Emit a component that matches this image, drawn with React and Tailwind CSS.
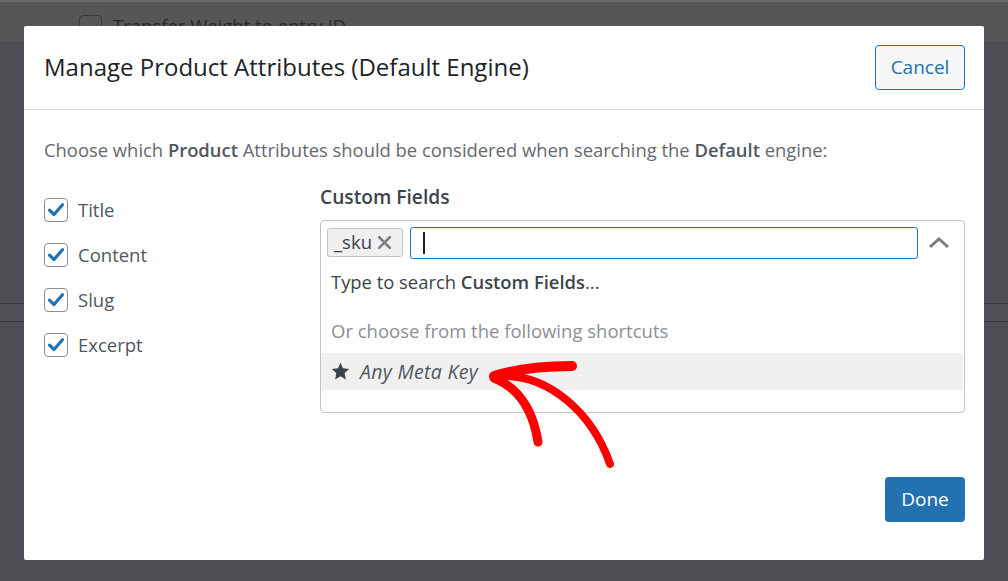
import { useState } from 'react'

const font = { fontFamily: '"Open Sans", "Noto Sans", sans-serif' }

function Check({ label }) {
  return (
    <label className="flex items-center gap-[10px] h-[24px]">
      <span className="w-[24px] h-[24px] rounded-[4px] border border-[#8c8f94] bg-white flex items-center justify-center flex-shrink-0">
        <svg className="w-[20px] h-[20px]" viewBox="0 0 20 20">
          <path d="M3.5 10.2 L8 14.5 L16.5 4.8" fill="none" stroke="#2271b1" strokeWidth="3.2" strokeLinecap="round" strokeLinejoin="round" />
        </svg>
      </span>
      <span className="text-[18.5px] text-[#50575e] leading-none">{label}</span>
    </label>
  )
}

export default function App() {
  const [fields] = useState(['Title', 'Content', 'Slug', 'Excerpt'])

  return (
    <div className="relative w-[1008px] h-[581px] overflow-hidden bg-[#4d4e53]" style={font}>

      {/* ── dimmed page behind ── */}
      <div className="flex flex-col">
        <div className="h-[2px] bg-[#6a6a6a]" />
        <div className="flex items-center gap-[11px] pl-[79px] pt-[9px] bg-[#565656] h-[40px]">
          <span className="w-[23px] h-[23px] rounded-[4px] border border-[#3b3b3b]" />
          <span className="text-[18.5px] text-[#28292c] leading-none">Transfer Weight to entry ID</span>
        </div>
        <div className="h-[261px]" />
        <div className="h-px bg-[#3a3b3f]" />
        <div className="h-[17px] bg-[#505156]" />
        <div className="h-px bg-[#3a3b3f]" />
      </div>

      {/* ── Modal ── */}
      <div className="absolute left-[24px] top-[26px] w-[960px] h-[534px] bg-white rounded-[2px] flex flex-col">

        {/* Header */}
        <div className="h-[84px] pl-5 pr-[19px] flex items-center justify-between border-b border-[#dcdcde]">
          <h2 className="text-[24px] text-[#1d2327] leading-none pb-[2px]">Manage Product Attributes (Default Engine)</h2>
          <button className="w-[90px] h-[45px] rounded-[4px] border border-[#2271b1] bg-[#f6f7f7] text-[#2271b1] text-[19px] leading-none">
            Cancel
          </button>
        </div>

        {/* Body */}
        <div className="pl-5 pr-[19px] pt-[28px] flex-1 flex flex-col">
          <p className="text-[18.4px] text-[#646970] leading-[24px]">
            Choose which <span className="font-semibold text-[#50575e]">Product</span> Attributes should be considered when searching the <span className="font-semibold text-[#50575e]">Default</span> engine:
          </p>

          <div className="flex mt-[23px]">
            <div className="w-[276px] flex flex-col gap-[21px] pt-[13px]">
              {fields.map((f) => <Check key={f} label={f} />)}
            </div>

            <div className="flex-1 flex flex-col">
              <p className="text-[19.2px] font-semibold text-[#3c434a] leading-[24px]">Custom Fields</p>

              <div className="mt-[11px] h-[193px] border border-[#c3c4c7] rounded-[4px] flex flex-col">
                <div className="flex items-center pl-[6px] pt-[5px] h-[38px]">
                  <span className="h-[29px] w-[76px] rounded-[3px] border border-[#c3c4c7] bg-[#f0f0f1] flex items-center pl-[6px] gap-[5px] text-[18.5px] text-[#3c434a] leading-none">
                    _sku
                    <svg className="w-[15px] h-[15px]" viewBox="0 0 14 14">
                      <path d="M2 2 L12 12 M12 2 L2 12" stroke="#787c82" strokeWidth="2.4" strokeLinecap="round" />
                    </svg>
                  </span>
                  <div className="ml-[7px] w-[508px] h-[32px] rounded-[3px] border-[1.5px] border-[#2271b1] flex items-center pl-[12px]">
                    <span className="w-[2px] h-[22px] bg-[#1d2327]" />
                  </div>
                  <svg className="ml-[10px] w-[22px] h-[14px]" viewBox="0 0 22 14">
                    <path d="M2 11 L11 3 L20 11" fill="none" stroke="#787c82" strokeWidth="3" />
                  </svg>
                </div>

                <p className="pl-[10px] pt-[11px] text-[18.4px] text-[#3c434a] leading-[24px]">
                  Type to search <span className="font-semibold">Custom Fields</span>...
                </p>
                <p className="pl-[10px] pt-[25px] text-[18.5px] text-[#8c8f94] leading-[24px]">
                  Or choose from the following shortcuts
                </p>
                <div className="mt-[10px] mr-px h-[37px] bg-[#f0f0f1] flex items-center pl-[10px] gap-[10px]">
                  <svg className="w-[19px] h-[19px]" viewBox="0 0 24 24">
                    <path d="M12 1 L15.2 8 L23 8.8 L17.2 14 L18.8 22 L12 18 L5.2 22 L6.8 14 L1 8.8 L8.8 8 Z" fill="#3c434a" />
                  </svg>
                  <span className="italic text-[19.5px] tracking-[0.3px] text-[#50575e] leading-none">Any Meta Key</span>
                </div>
              </div>
            </div>
          </div>

          <div className="mt-auto mb-[38px] flex justify-end">
            <button className="w-[80px] h-[45px] rounded-[4px] bg-[#2271b1] text-white text-[19px] leading-none">
              Done
            </button>
          </div>
        </div>
      </div>

      {/* ── hand-drawn arrow annotation ── */}
      <svg className="absolute inset-0 pointer-events-none" width="1008" height="581" viewBox="0 0 1008 581">
        <g fill="none" stroke="#ff0000" strokeLinecap="round" strokeLinejoin="round">
          <path d="M494 376 C520 368 548 366 572 366" strokeWidth="10" />
          <path d="M494 378 C514 386 532 404 538 442" strokeWidth="9" />
          <path d="M500 376 C548 374 592 412 610 464" strokeWidth="8" />
        </g>
      </svg>
    </div>
  )
}
